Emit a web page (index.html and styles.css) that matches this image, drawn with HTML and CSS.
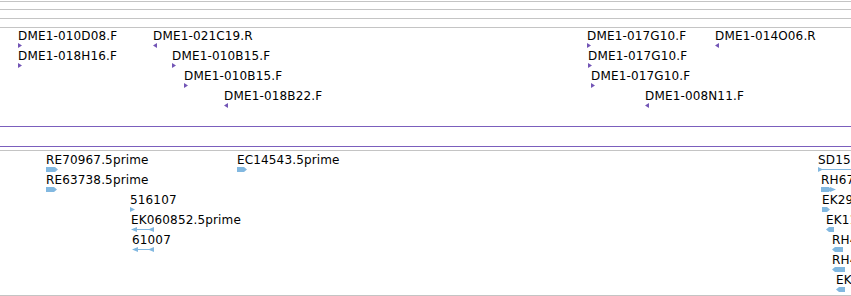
FILE: index.html
```html
<!DOCTYPE html>
<html lang="en">
<head>
    <meta charset="UTF-8">
    <title>Track view</title>
    <link rel="stylesheet" href="styles.css">
</head>
<body>

    <div class="panel">
        <!-- ruler rows above the tracks -->
        <div class="ruler">
            <div class="band first"></div>
            <div class="band"></div>
            <div class="band"></div>
        </div>

        <!-- EST ends track (purple) -->
        <div class="track track-top purple">
            <div class="feat" style="left:18px;top:1px"><span class="lbl">DME1-010D08.F</span><svg width="4" height="5"><path d="M0 0L4 2.5L0 5Z"/></svg></div>
            <div class="feat" style="left:18px;top:21px"><span class="lbl">DME1-018H16.F</span><svg width="4" height="5"><path d="M0 0L4 2.5L0 5Z"/></svg></div>
            <div class="feat" style="left:153px;top:1px"><span class="lbl">DME1-021C19.R</span><svg width="4" height="5"><path d="M4 0L0 2.5L4 5Z"/></svg></div>
            <div class="feat" style="left:172px;top:21px"><span class="lbl">DME1-010B15.F</span><svg width="4" height="5"><path d="M0 0L4 2.5L0 5Z"/></svg></div>
            <div class="feat" style="left:184px;top:41px"><span class="lbl">DME1-010B15.F</span><svg width="4" height="5"><path d="M0 0L4 2.5L0 5Z"/></svg></div>
            <div class="feat" style="left:224px;top:61px"><span class="lbl">DME1-018B22.F</span><svg width="4" height="5"><path d="M4 0L0 2.5L4 5Z"/></svg></div>
            <div class="feat" style="left:587px;top:1px"><span class="lbl">DME1-017G10.F</span><svg width="4" height="5"><path d="M0 0L4 2.5L0 5Z"/></svg></div>
            <div class="feat" style="left:588px;top:21px"><span class="lbl">DME1-017G10.F</span><svg width="4" height="5"><path d="M0 0L4 2.5L0 5Z"/></svg></div>
            <div class="feat" style="left:591px;top:41px"><span class="lbl">DME1-017G10.F</span><svg width="4" height="5"><path d="M0 0L4 2.5L0 5Z"/></svg></div>
            <div class="feat" style="left:645px;top:61px"><span class="lbl">DME1-008N11.F</span><svg width="4" height="5"><path d="M4 0L0 2.5L4 5Z"/></svg></div>
            <div class="feat" style="left:715px;top:1px"><span class="lbl">DME1-014O06.R</span><svg width="4" height="5"><path d="M4 0L0 2.5L4 5Z"/></svg></div>
        </div>

        <div class="divider"></div>

        <!-- cDNA 5' ends track (blue) -->
        <div class="track track-bottom blue">
            <div class="feat" style="left:46px;top:2px"><span class="lbl">RE70967.5prime</span><svg width="12" height="5"><path d="M0 0H9L12 2.5L9 5H0Z"/></svg></div>
            <div class="feat" style="left:46px;top:22px"><span class="lbl">RE63738.5prime</span><svg width="11" height="5"><path d="M0 0H8L11 2.5L8 5H0Z"/></svg></div>
            <div class="feat" style="left:130px;top:42px"><span class="lbl">516107</span><svg width="5" height="5"><path d="M0 0L5 2.5L0 5Z"/></svg></div>
            <div class="feat" style="left:131px;top:62px"><span class="lbl">EK060852.5prime</span><svg width="23" height="5"><path d="M0 2.5L6 0V5Z M6 2H18V3H6Z M17 2.5L23 0V5Z"/></svg></div>
            <div class="feat" style="left:132px;top:82px"><span class="lbl">61007</span><svg width="22" height="5"><path d="M0 2.5L6 0V5Z M6 2H17V3H6Z M16 2.5L22 0V5Z"/></svg></div>
            <div class="feat" style="left:237px;top:2px"><span class="lbl">EC14543.5prime</span><svg width="10" height="5"><path d="M0 0H7L10 2.5L7 5H0Z"/></svg></div>

            <div class="feat" style="left:818px;top:2px"><span class="lbl">SD15032.5prime</span><svg width="40" height="5"><path d="M0 0L5 2.5L0 5Z M4 2H40V3H4Z"/></svg></div>
            <div class="feat" style="left:821px;top:22px"><span class="lbl">RH67722.5prime</span><svg width="15" height="5"><path d="M0 0H8L10 2.5L8 5H0Z M9 0L15 2.5L9 5Z"/></svg></div>
            <div class="feat" style="left:822px;top:42px"><span class="lbl">EK293418.5prime</span><svg width="8" height="5"><path d="M0 0H5L8 2.5L5 5H0Z"/></svg></div>
            <div class="feat" style="left:826px;top:62px"><span class="lbl">EK117201.5prime</span><svg width="8" height="5"><path d="M0 2.5L3 0H8V5H3Z"/></svg></div>
            <div class="feat" style="left:832px;top:82px"><span class="lbl">RH43170.5prime</span><svg width="11" height="5"><path d="M0 2.5L3 0H11V5H3Z"/></svg></div>
            <div class="feat" style="left:832px;top:102px"><span class="lbl">RH42571.5prime</span><svg width="13" height="5"><path d="M0 2.5L3 0H13V5H3Z"/></svg></div>
            <div class="feat" style="left:836px;top:122px"><span class="lbl">EK331860.5prime</span><svg width="9" height="5"><path d="M0 2.5L3 0H9V5H3Z"/></svg></div>
        </div>
    </div>

</body>
</html>
```

FILE: styles.css
```css
/* General */
body {
    margin: 0;
    background-color: #ffffff;
    font-family: 'DejaVu Sans', sans-serif;
    font-size: 12px;
    color: #000;
    overflow: hidden;
}

.panel {
    width: 851px;
    height: 296px;
    overflow: hidden;
}

/* Ruler */
.ruler {
    padding-top: 1px;
}

.band {
    height: 8px;
    border-top: 1px solid #c4c4c4;
}

.band.first {
    height: 7px;
}

/* Tracks */
.track {
    position: relative;
    overflow: hidden;
    border-top: 1px solid #c4c4c4;
}

.track-top {
    height: 98px;
}

.track-bottom {
    height: 144px;
    border-bottom: 1px solid #c4c4c4;
}

.divider {
    height: 19px;
    border-top: 1px solid #7b5fbd;
    border-bottom: 1px solid #7b5fbd;
    margin-bottom: 3px;
}

.purple {
    color: #7356b6;
}

.blue {
    color: #82b8e0;
}

/* Features */
.feat {
    position: absolute;
    display: flex;
    flex-direction: column;
    align-items: flex-start;
}

.feat .lbl {
    line-height: 14px;
    white-space: nowrap;
    letter-spacing: 0.15px;
    color: #000;
}

.feat svg {
    display: block;
    fill: currentColor;
}
```
